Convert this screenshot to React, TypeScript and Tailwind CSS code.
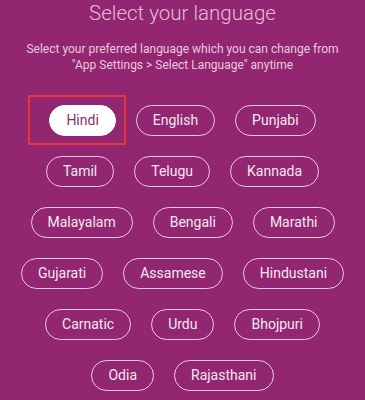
import React from 'react';

const rows: string[][] = [
    ['Hindi', 'English', 'Punjabi'],
    ['Tamil', 'Telugu', 'Kannada'],
    ['Malayalam', 'Bengali', 'Marathi'],
    ['Gujarati', 'Assamese', 'Hindustani'],
    ['Carnatic', 'Urdu', 'Bhojpuri'],
    ['Odia', 'Rajasthani'],
];

const Pill: React.FC<{ label: string; selected?: boolean }> = ({ label, selected }) => {
    if (selected) {
        return (
            <div className="relative">
                {/* red highlight box */}
                <div className="absolute -left-[21px] -right-[10px] -top-[10px] -bottom-[9px] border-2 border-[#e8343b]"></div>
                <div className="h-[31px] px-[16px] flex items-center rounded-full bg-white text-[14px] text-[#8e2a6c] border-[1.5px] border-white">
                    {label}
                </div>
            </div>
        );
    }
    return (
        <div className="h-[31px] px-[16px] flex items-center rounded-full border-[1.5px] border-[#eccbe0] text-[14px] text-[#f6e6f0]">
            {label}
        </div>
    );
};

export default function App() {
    return (
        <div
            className="w-[365px] h-[400px] overflow-hidden bg-[#922670] flex flex-col items-center"
            style={{ fontFamily: 'Roboto, "Liberation Sans", sans-serif' }}
        >
            <h1 className="text-[20.5px] leading-[26px] font-light text-[#e7bdd9]">Select your language</h1>
            <p className="mt-[15px] text-[12px] leading-[16px] text-center text-[#ecc9df]">
                Select your preferred language which you can change from
                <br />
                "App Settings &gt; Select Language" anytime
            </p>

            <div className="mt-[32px] flex flex-col items-center gap-[20px]">
                {rows.map((row, i) => (
                    <div key={i} className="flex gap-[20px]">
                        {row.map((lang) => (
                            <Pill key={lang} label={lang} selected={lang === 'Hindi'} />
                        ))}
                    </div>
                ))}
            </div>
        </div>
    );
}
